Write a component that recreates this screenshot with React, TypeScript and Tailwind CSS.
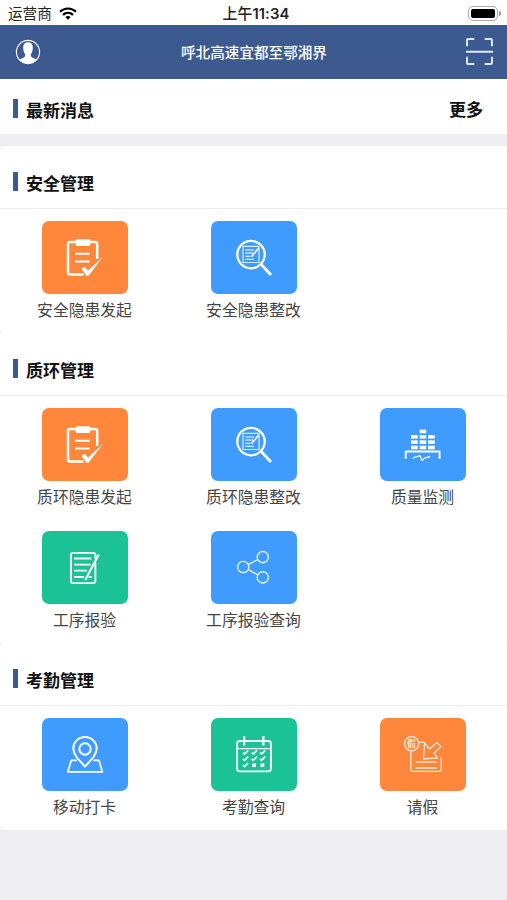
import React from 'react';

type Tone = 'orange' | 'blue' | 'green';

interface Entry {
  label: string;
  tone: Tone;
  icon: React.FC;
}

const tones: Record<Tone, string> = {
  orange: 'bg-[#fe873b]',
  blue: 'bg-[#3f9cfe]',
  green: 'bg-[#1ac295]',
};

const IconFrame: React.FC<{ width?: number; children: React.ReactNode }> = ({ width = 2, children }) => (
  <svg viewBox="0 0 86 73" className="h-full w-full" fill="none" stroke="white" strokeWidth={width} strokeLinejoin="round">
    {children}
  </svg>
);

const ClipboardCheck = () => (
  <IconFrame width={2.5}>
    <path d="M41.5 53.6H28Q26 53.6 26 51.6V23Q26 21 28 21H53Q55.2 21 55.2 23V38" />
    <rect x="33.7" y="18.3" width="14.6" height="6.8" rx="1.5" fill="white" stroke="none" />
    <path d="M33 32.7H47.8M33 40.5H47.8" strokeWidth="1.9" />
    <path d="M39.4 47.8L42.6 45.8L46 49.4L60.8 36L46.6 54.8H44.4Z" fill="white" stroke="none" />
  </IconFrame>
);

const SearchDoc = () => (
  <IconFrame>
    <circle cx="40" cy="33.6" r="13.7" strokeWidth="2.3" />
    <path d="M50 43.2L60 54" strokeWidth="2.8" />
    <rect x="32" y="25.3" width="16" height="16.2" strokeWidth="1.2" opacity="0.8" />
    <path d="M34.3 29H43M34.3 32H42M34.3 35.3H39.5M34.3 38.2H43" strokeWidth="1.1" />
    <path d="M47.8 27L40.5 35.6" strokeWidth="1.7" />
  </IconFrame>
);

const Monitor = () => (
  <IconFrame>
    <g fill="white" stroke="none">
      <rect x="39.6" y="21.6" width="6.6" height="3.6" />
      {[27, 32.3, 37.7].map((y) => (
        <g key={y}>
          <rect x="31" y={y} width="6.7" height="3.6" />
          <rect x="39.6" y={y} width="6.6" height="3.6" />
          <rect x="48.1" y={y} width="6.6" height="3.6" />
        </g>
      ))}
    </g>
    <path d="M25.7 51V43.5H59.6V51" strokeWidth="1.9" />
    <path d="M33.4 49.7L40 47.6L42 52.6L44.4 50.2L49.3 48.6" strokeWidth="1.2" />
    <circle cx="33.6" cy="49.7" r="0.9" fill="white" stroke="none" />
    <circle cx="49.3" cy="48.6" r="0.9" fill="white" stroke="none" />
  </IconFrame>
);

const NotePen = () => (
  <IconFrame>
    <path d="M53.4 32V50Q53.4 52.1 51.3 52.1H31Q28.9 52.1 28.9 50V24Q28.9 21.9 31 21.9H51.3Q53.4 21.9 53.4 24V28" strokeWidth="1.9" />
    <path d="M32 27.5H49.3M32 33.6H48.6M32 39.7H45M32 46H42M46.5 46H49.8" strokeWidth="1.8" />
    <path d="M56.8 23.4L43.2 49" strokeWidth="2.1" />
  </IconFrame>
);

const Share = () => (
  <IconFrame width={1.4}>
    <g opacity="0.85">
      <circle cx="32.2" cy="36" r="5.6" />
      <circle cx="51.8" cy="26.1" r="5.6" />
      <circle cx="51.8" cy="46.4" r="5.6" />
      <path d="M37.3 33.4L46.8 28.7M37.3 38.7L46.8 43.8" />
    </g>
  </IconFrame>
);

const MapPin = () => (
  <IconFrame width={2}>
    <circle cx="43" cy="31" r="5.7" />
    <path d="M43 48.5C37 42 31.3 36.6 31.3 30.6A11.7 11.6 0 0 1 54.7 30.6C54.7 36.6 49 42 43 48.5Z" />
    <path d="M34.8 42.3H29.3L25.8 53.8H60.4L56.9 42.3H51.4" strokeWidth="1.7" />
  </IconFrame>
);

const Calendar = () => (
  <IconFrame width={1.9}>
    <rect x="26.1" y="23" width="33.8" height="30.4" rx="2.6" />
    <path d="M26 30.6H60" strokeWidth="1.4" />
    <path d="M33.2 18V27.6M52.4 18V27.6" strokeWidth="2.2" />
    <path
      d="M32 34.6L33.5 36.1L37.2 32.4M40.7 34.6L42.2 36.1L45.9 32.4M49 34.6L50.5 36.1L54.2 32.4M32 40.9L33.5 42.4L37.2 38.7M40.7 40.9L42.2 42.4L45.9 38.7M49 40.9L50.5 42.4L54.2 38.7M32 47.2L33.5 48.7L37.2 45"
      strokeWidth="1.7"
    />
    <path d="M41.2 47.2H45M49.5 47.2H53.3" strokeWidth="3.6" />
  </IconFrame>
);

const Leave = () => (
  <IconFrame width={1.3}>
    <g opacity="0.82">
      <circle cx="31.6" cy="25.7" r="7.1" />
      <text x="31.6" y="29.1" textAnchor="middle" fontSize="9" fontWeight="700" fill="white" stroke="none">
        假
      </text>
      <path d="M39.3 24.3H44.6L43.6 41L57.6 39.8L54 35.2L60.8 28.6L56.8 24.4L49.5 31L45 25.6" />
      <path d="M30.8 33V51.5Q30.8 53.4 32.8 53.4H59.3Q61.3 53.4 61.3 51.5V39" />
      <path d="M35.6 44.2H56.7M35.6 50H56.7" />
    </g>
  </IconFrame>
);

const sections: { title: string; entries: Entry[] }[] = [
  {
    title: '安全管理',
    entries: [
      { label: '安全隐患发起', tone: 'orange', icon: ClipboardCheck },
      { label: '安全隐患整改', tone: 'blue', icon: SearchDoc },
    ],
  },
  {
    title: '质环管理',
    entries: [
      { label: '质环隐患发起', tone: 'orange', icon: ClipboardCheck },
      { label: '质环隐患整改', tone: 'blue', icon: SearchDoc },
      { label: '质量监测', tone: 'blue', icon: Monitor },
      { label: '工序报验', tone: 'green', icon: NotePen },
      { label: '工序报验查询', tone: 'blue', icon: Share },
    ],
  },
  {
    title: '考勤管理',
    entries: [
      { label: '移动打卡', tone: 'blue', icon: MapPin },
      { label: '考勤查询', tone: 'green', icon: Calendar },
      { label: '请假', tone: 'orange', icon: Leave },
    ],
  },
];

const SectionTitle: React.FC<{ title: string }> = ({ title }) => (
  <div className="flex h-5 items-start">
    <span className="h-[19px] w-[5px] bg-[#3c5a92]" />
    <h2 className="ml-2 text-[17px] leading-[21px] font-bold text-[#111]">{title}</h2>
  </div>
);

const StatusBar = () => (
  <div className="grid h-[25px] grid-cols-3 items-center bg-white text-[14.6px] leading-5 text-[#222]">
    <div className="flex items-center pt-px pl-2">
      <span>运营商</span>
      <svg viewBox="0 0 18 13" className="ml-[7px] h-[13px] w-[18px]" fill="none" stroke="black" strokeWidth="2.2">
        <path d="M1 4.7C5.6 0.4 12.4 0.4 17 4.7" />
        <path d="M4 7.9C6.9 5.2 11.1 5.2 14 7.9" />
        <path d="M6.3 10.1Q9 7.8 11.7 10.1L9 12.7Z" fill="black" stroke="none" />
      </svg>
    </div>
    <div className="pt-[3px] pl-[5px] text-center font-['Inter','Noto_Sans_CJK_SC',sans-serif] text-[14.8px] font-semibold tracking-[0.1px] whitespace-nowrap">
      <span className="font-medium">上午</span>11:34
    </div>
    <div className="flex items-center justify-end pt-0.5 pr-[6px]">
      <div className="h-[15px] w-[30px] rounded-[5px] border border-[#aaa] p-[2px]">
        <div className="h-full w-full rounded-[2px] bg-black" />
      </div>
      <span className="ml-px h-[5px] w-[2px] rounded-r-full bg-[#999]" />
    </div>
  </div>
);

const Header = () => (
  <header className="grid h-[54px] grid-cols-[60px_1fr_60px] items-center bg-[#3d5a90] pb-px text-white">
    <svg viewBox="0 0 26 26" className="ml-[15px] size-[26px]">
      <circle cx="13" cy="13" r="11.6" fill="none" stroke="white" strokeWidth="1.1" />
      <path
        d="M13 3.2C9.6 3.2 8 5.5 8.2 9C8.3 12 9.2 14 10.2 15.2C10.5 17.2 9.6 18.3 7.4 19.2Q5 20 4.2 21C9 25.8 17 25.8 21.8 21Q21 20 18.6 19.2C16.4 18.3 15.5 17.2 15.8 15.2C16.8 14 17.7 12 17.8 9C18 5.5 16.4 3.2 13 3.2Z"
        fill="white"
      />
    </svg>
    <h1 className="pl-px text-center text-[14.6px] font-medium">呼北高速宜都至鄂湘界</h1>
    <svg viewBox="0 0 26 26" className="ml-[19px] size-[27px]" fill="none" stroke="#dbeaff" strokeWidth="1.9">
      <path d="M1 8V2Q1 1 2 1H8M18 1H24Q25 1 25 2V8M25 18V24Q25 25 24 25H18M8 25H2Q1 25 1 24V18M0 13.2H26" />
    </svg>
  </header>
);

const App: React.FC = () => (
  <div className="h-[900px] w-[507px] overflow-hidden bg-[#eeeef2] font-['Noto_Sans_CJK_SC',sans-serif]">
    <StatusBar />
    <Header />

    <div className="flex h-[55px] items-center justify-between bg-white pt-1 pr-6 pl-[13px]">
      <SectionTitle title="最新消息" />
      <a className="text-[17px] leading-5 font-bold text-[#111]">更多</a>
    </div>

    <main className="mt-3">
      {sections.map((section) => (
        <section key={section.title} className="rounded-[3px] bg-white">
          <div className="h-[63.2px] border-b border-[#efeff2] pt-[26px] pl-[13px]">
            <SectionTitle title={section.title} />
          </div>
          <div className="grid grid-cols-3">
            {section.entries.map((entry) => {
              const Icon = entry.icon;
              return (
                <div key={entry.label} className="flex h-[123.6px] flex-col items-center pt-[11.8px]">
                  <div className={`h-[73px] w-[86px] rounded-[7px] ${tones[entry.tone]}`}>
                    <Icon />
                  </div>
                  <span className="mt-1 text-[15.8px] leading-6 text-[#444]">{entry.label}</span>
                </div>
              );
            })}
          </div>
        </section>
      ))}
    </main>
  </div>
);

export default App;
